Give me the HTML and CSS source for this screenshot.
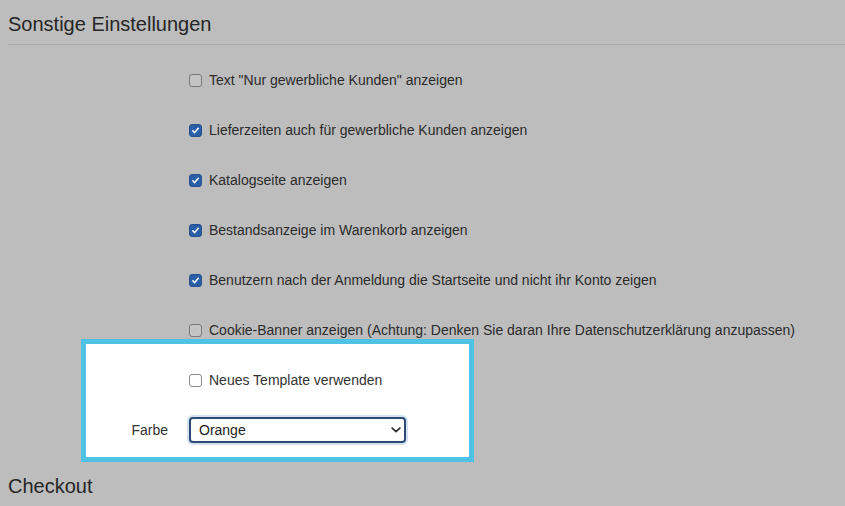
FILE: index.html
```html
<!DOCTYPE html>
<html lang="de">
<head>
<meta charset="utf-8">
<title>Sonstige Einstellungen</title>
<link rel="stylesheet" href="styles.css">
</head>
<body>
<section class="section">
  <h2 class="section-title">Sonstige Einstellungen</h2>
  <div class="rows">
    <div class="row"><div class="label"></div><label class="control"><span class="cb"></span>Text "Nur gewerbliche Kunden" anzeigen</label></div>
    <div class="row"><div class="label"></div><label class="control"><span class="cb checked"><svg viewBox="0 0 13 13"><path d="M3.3 6.8 L5.5 9 L9.8 3.9" /></svg></span>Lieferzeiten auch für gewerbliche Kunden anzeigen</label></div>
    <div class="row"><div class="label"></div><label class="control"><span class="cb checked"><svg viewBox="0 0 13 13"><path d="M3.3 6.8 L5.5 9 L9.8 3.9" /></svg></span>Katalogseite anzeigen</label></div>
    <div class="row"><div class="label"></div><label class="control"><span class="cb checked"><svg viewBox="0 0 13 13"><path d="M3.3 6.8 L5.5 9 L9.8 3.9" /></svg></span>Bestandsanzeige im Warenkorb anzeigen</label></div>
    <div class="row"><div class="label"></div><label class="control"><span class="cb checked"><svg viewBox="0 0 13 13"><path d="M3.3 6.8 L5.5 9 L9.8 3.9" /></svg></span>Benutzern nach der Anmeldung die Startseite und nicht ihr Konto zeigen</label></div>
    <div class="row"><div class="label"></div><label class="control"><span class="cb"></span>Cookie-Banner anzeigen (Achtung: Denken Sie daran Ihre Datenschutzerklärung anzupassen)</label></div>
    <div class="highlight">
      <div class="row"><div class="label"></div><label class="control"><span class="cb light"></span>Neues Template verwenden</label></div>
      <div class="row"><div class="label">Farbe</div>
        <div class="control">
          <div class="select-wrap">
            <select class="select"><option>Orange</option></select>
            <svg class="chev" viewBox="0 0 10 6"><path d="M1.2 1.2 L5 4.6 L8.8 1.2"/></svg>
          </div>
        </div>
      </div>
    </div>
  </div>
</section>
<section class="section">
  <h2 class="section-title checkout">Checkout</h2>
</section>
</body>
</html>
```
FILE: styles.css
```css
html, body {
  margin: 0;
  padding: 0;
  background: #bdbdbd;
  font-family: "Liberation Sans", Arial, Helvetica, sans-serif;
  color: #2b2b2b;
  overflow: hidden;
}
.section {
  padding: 0 0 0 8px;
}
.section-title {
  margin: 0;
  padding: 12px 0 8px 0;
  font-size: 20px;
  line-height: 24px;
  font-weight: normal;
  color: #262626;
  border-bottom: 1px solid #a9a9a9;
}
.checkout {
  margin-top: 7px;
}
.rows {
  margin-top: 10px;
}
.row {
  display: grid;
  grid-template-columns: 160px 1fr;
  column-gap: 21px;
  height: 50px;
  align-items: center;
  font-size: 14px;
  position: relative;
}
.label {
  text-align: right;
}
.control {
  display: flex;
  align-items: center;
}
.cb {
  width: 11px;
  height: 11px;
  border: 1px solid #7a7a7a;
  border-radius: 3px;
  background: #c4c4c4;
  margin-right: 7px;
  display: inline-flex;
  flex: none;
}
.cb.light {
  background: #fff;
  border-color: #8a8a8a;
}
.cb.checked {
  background: #2a5ea6;
  border-color: #24528f;
}
.cb svg {
  width: 11px;
  height: 11px;
}
.cb svg path {
  fill: none;
  stroke: #fff;
  stroke-width: 1.8;
  stroke-linecap: round;
  stroke-linejoin: round;
}
.highlight {
  position: relative;
  z-index: 0;
  color: #333;
}
.highlight::before {
  content: "";
  position: absolute;
  top: -16px;
  bottom: -7px;
  left: 73px;
  width: 383px;
  background: #fff;
  border: 5px solid #4ec3e5;
  z-index: -1;
}
.select-wrap {
  position: relative;
  width: 217px;
  height: 26px;
}
.select {
  appearance: none;
  -webkit-appearance: none;
  width: 217px;
  height: 26px;
  box-sizing: border-box;
  border: 2px solid #2d4c74;
  border-radius: 4px;
  background: #fff;
  font-family: "Liberation Sans", Arial, sans-serif;
  font-size: 14px;
  color: #222;
  padding: 0 0 0 8px;
  box-shadow: 0 0 0 2px #d3e2f3;
  outline: none;
  margin: 0;
}
.chev {
  position: absolute;
  right: 5px;
  top: 10px;
  width: 10px;
  height: 6px;
}
.chev path {
  fill: none;
  stroke: #333;
  stroke-width: 1.8;
  stroke-linecap: round;
  stroke-linejoin: round;
}
```
